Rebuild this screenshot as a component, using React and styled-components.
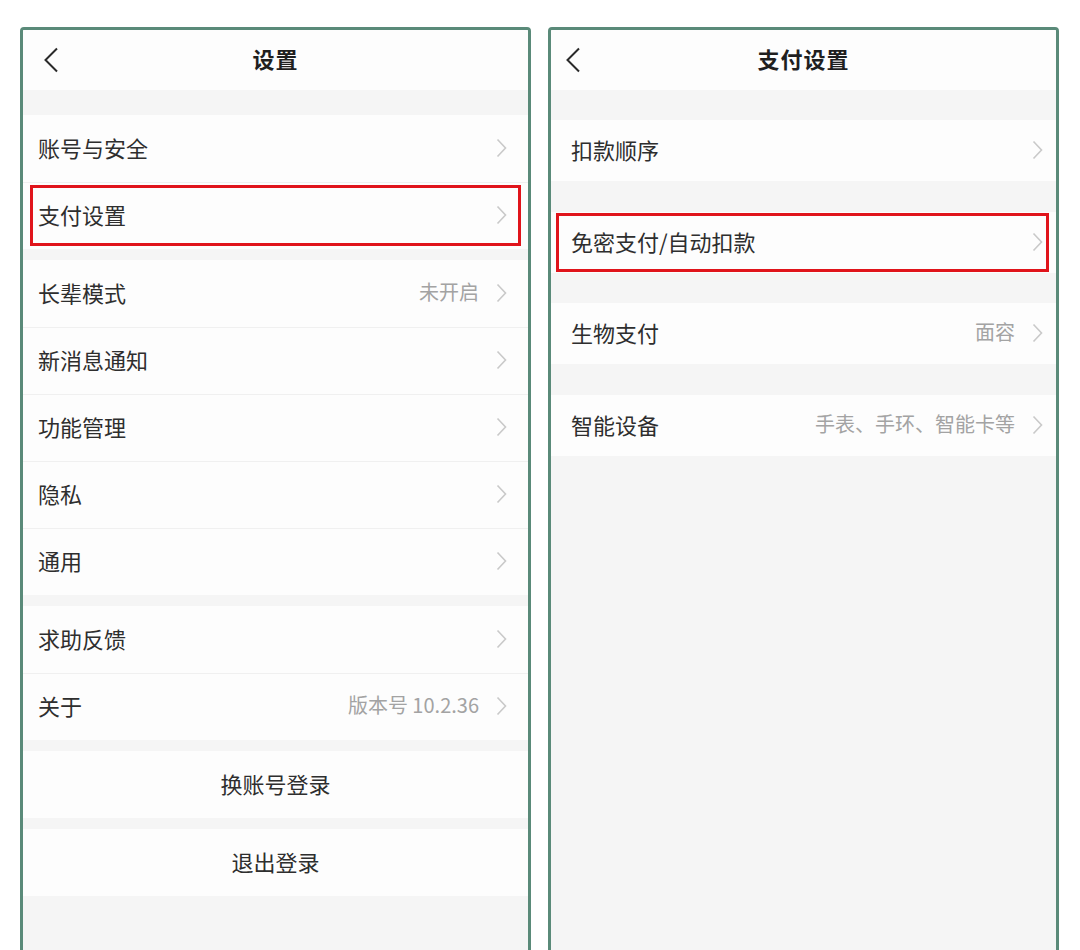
import styled, { createGlobalStyle } from 'styled-components';

const GlobalStyle = createGlobalStyle`
  html, body {
    margin: 0;
    padding: 0;
    background: #ffffff;
    overflow: hidden;
  }
  body {
    font-family: "Noto Sans CJK SC", "Noto Sans", sans-serif;
    color: #2e2e2e;
  }
`;

const Page = styled.div`
  display: flex;
  gap: 17px;
  padding: 27px 0 0 20px;
`;

const Phone = styled.div`
  width: 505px;
  height: 960px;
  border: 3px solid #5a8a79;
  border-radius: 4px;
  background: #f5f5f5;
  overflow: hidden;
  display: flex;
  flex-direction: column;
`;

const TopBar = styled.div`
  position: relative;
  height: 60px;
  box-sizing: border-box;
  padding-bottom: 4px;
  display: flex;
  align-items: center;
  justify-content: center;
  background: #fdfdfd;
`;

const BackBtn = styled.div`
  position: absolute;
  left: ${(p) => p.$left}px;
  top: 17px;
  display: flex;
`;

const Title = styled.div`
  font-size: 22px;
  font-weight: 700;
  color: #1f1f1f;
  letter-spacing: 1px;
`;

const Group = styled.div`
  margin-top: ${(p) => p.$gap}px;
  background: #fdfdfd;
`;

const Row = styled.div`
  position: relative;
  box-sizing: border-box;
  height: ${(p) => p.$h}px;
  display: flex;
  align-items: center;
  justify-content: ${(p) => (p.$center ? 'center' : 'space-between')};
  padding: 0 ${(p) => p.$pr}px 4px ${(p) => p.$pl}px;
  font-size: 22px;
  color: #2e2e2e;

  & + & {
    box-shadow: inset 0 1px 0 #f0f0f0;
  }

  ${(p) =>
    p.$marked &&
    `
    &::after {
      content: '';
      position: absolute;
      top: ${p.$markY}px;
      bottom: ${p.$markY}px;
      left: ${p.$markL}px;
      right: ${p.$markR}px;
      border: 3px solid #e0141b;
    }
  `}
`;

const Side = styled.div`
  display: flex;
  align-items: center;
  gap: 17px;
  font-size: 20px;
  color: #a3a3a3;

  svg {
    margin-top: 3px;
  }
`;

const Chevron = () => (
  <svg width="11" height="20" viewBox="0 0 11 20">
    <polyline points="1.5,1.5 9.5,10 1.5,18.5" fill="none" stroke="#c9c9c9" strokeWidth="1.6" />
  </svg>
);

const BackArrow = () => (
  <svg width="16" height="26" viewBox="0 0 16 26">
    <polyline points="14,1.5 2.5,13 14,24.5" fill="none" stroke="#2a2a2a" strokeWidth="2" />
  </svg>
);

const settingsGroups = [
  { gap: 25, rows: [{ label: '账号与安全' }, { label: '支付设置', marked: true }] },
  {
    gap: 11,
    rows: [
      { label: '长辈模式', value: '未开启' },
      { label: '新消息通知' },
      { label: '功能管理' },
      { label: '隐私' },
      { label: '通用' },
    ],
  },
  { gap: 11, rows: [{ label: '求助反馈' }, { label: '关于', value: '版本号 10.2.36' }] },
];

const payGroups = [
  { gap: 30, rows: [{ label: '扣款顺序' }] },
  { gap: 31, rows: [{ label: '免密支付/自动扣款', marked: true }] },
  { gap: 30, rows: [{ label: '生物支付', value: '面容' }] },
  { gap: 31, rows: [{ label: '智能设备', value: '手表、手环、智能卡等' }] },
];

const SettingsList = ({ groups, h, pl, pr, mark }) =>
  groups.map((g, i) => (
    <Group key={i} $gap={g.gap}>
      {g.rows.map((r) => (
        <Row
          key={r.label}
          $h={h}
          $pl={pl}
          $pr={pr}
          $marked={r.marked}
          $markY={mark.y}
          $markL={mark.l}
          $markR={mark.r}
        >
          <span>{r.label}</span>
          <Side>
            {r.value && <span>{r.value}</span>}
            <Chevron />
          </Side>
        </Row>
      ))}
    </Group>
  ));

export default function App() {
  return (
    <>
      <GlobalStyle />
      <Page>
        <Phone>
          <TopBar>
            <BackBtn $left={20}>
              <BackArrow />
            </BackBtn>
            <Title>设置</Title>
          </TopBar>
          <SettingsList groups={settingsGroups} h={67} pl={15} pr={21} mark={{ y: 3, l: 7, r: 7 }} />
          <Group $gap={11}>
            <Row $h={67} $pl={0} $pr={0} $center>
              换账号登录
            </Row>
          </Group>
          <Group $gap={11}>
            <Row $h={67} $pl={0} $pr={0} $center>
              退出登录
            </Row>
          </Group>
        </Phone>

        <Phone>
          <TopBar>
            <BackBtn $left={14}>
              <BackArrow />
            </BackBtn>
            <Title>支付设置</Title>
          </TopBar>
          <SettingsList groups={payGroups} h={61} pl={20} pr={13} mark={{ y: 1, l: 5, r: 7 }} />
        </Phone>
      </Page>
    </>
  );
}
